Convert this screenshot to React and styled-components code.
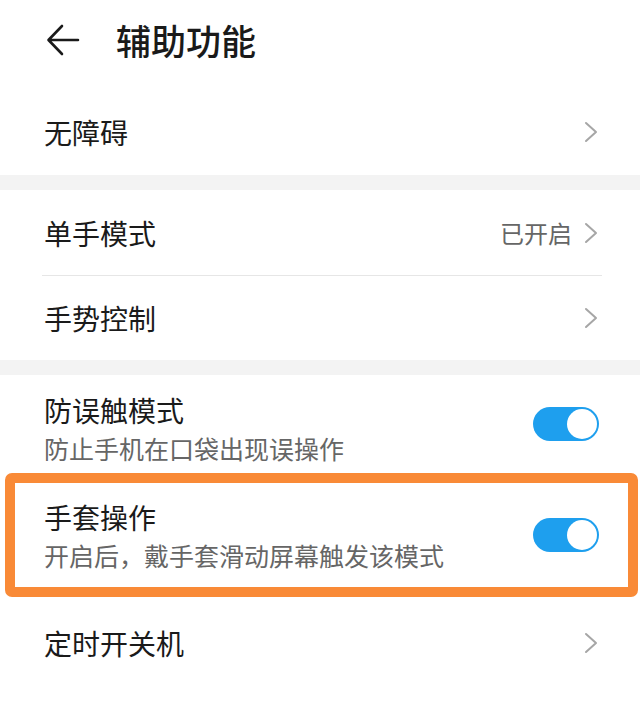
import styled, { createGlobalStyle } from "styled-components";

const GlobalStyle = createGlobalStyle`
  html, body {
    margin: 0;
    padding: 0;
    background: #fff;
  }
  body {
    font-family: "Noto Sans CJK SC", "Noto Sans", sans-serif;
    color: #1a1a1a;
  }
`;

const Page = styled.div`
  width: 640px;
  min-height: 707px;
  background: #fff;
  overflow: hidden;
`;

const Header = styled.header`
  height: 88px;
  display: flex;
  align-items: center;
  padding: 0 0 8px 46px;
  box-sizing: border-box;
  gap: 36px;
`;

const Title = styled.h1`
  margin: 0;
  font-size: 35px;
  font-weight: 500;
  line-height: 40px;
  color: #1a1a1a;
`;

const Gap = styled.div`
  height: 15px;
  background: #f3f3f3;
`;

const Row = styled.div`
  position: relative;
  display: flex;
  align-items: center;
  justify-content: space-between;
  box-sizing: border-box;
  height: ${(p) => p.$h}px;
  padding: 0 42px 0 44px;
  background: #fff;
`;

const Divider = styled.div`
  height: 1px;
  margin: 0 38px 0 42px;
  background: #e6e6e6;
`;

const Texts = styled.div`
  display: flex;
  flex-direction: column;
  gap: 4px;
  padding-top: ${(p) => p.$top || 0}px;
  align-self: ${(p) => (p.$top ? "flex-start" : "center")};
`;

const Label = styled.div`
  font-size: 28px;
  line-height: 36px;
  color: #1a1a1a;
`;

const Sub = styled.div`
  font-size: 25px;
  line-height: 33px;
  color: #666;
`;

const Right = styled.div`
  display: flex;
  align-items: center;
  gap: 12px;
  font-size: 24px;
  color: #666;
`;

const Toggle = styled.div`
  width: 66px;
  height: 34px;
  border-radius: 17px;
  background: #1e9fee;
  display: flex;
  align-items: center;
  justify-content: flex-end;
  padding: 2px;
  box-sizing: border-box;
  margin-right: -1px;

  &::after {
    content: "";
    width: 30px;
    height: 30px;
    border-radius: 50%;
    background: #fff;
  }
`;

// orange highlight drawn over the row
const Highlight = styled.div`
  position: absolute;
  left: 5px;
  right: 2px;
  top: 0;
  bottom: 0;
  border: 10px solid #f98a37;
  border-radius: 7px;
  pointer-events: none;
`;

function BackArrow() {
  return (
    <svg width="34" height="34" viewBox="0 0 34 34" fill="none">
      <path
        d="M32 17H3M16 3L2.5 17L16 31"
        stroke="#1a1a1a"
        strokeWidth="2.6"
        strokeLinecap="round"
        strokeLinejoin="round"
      />
    </svg>
  );
}

function Chevron() {
  return (
    <svg width="14" height="22" viewBox="0 0 14 22" fill="none">
      <path
        d="M2 2L12 11L2 20"
        stroke="#a6a6a6"
        strokeWidth="2"
        strokeLinecap="round"
        strokeLinejoin="round"
      />
    </svg>
  );
}

export default function App() {
  return (
    <Page>
      <GlobalStyle />
      <Header>
        <BackArrow />
        <Title>辅助功能</Title>
      </Header>

      <Row $h={87}>
        <Label>无障碍</Label>
        <Chevron />
      </Row>
      <Gap />

      <Row $h={85}>
        <Label>单手模式</Label>
        <Right>
          已开启
          <Chevron />
        </Right>
      </Row>
      <Divider />
      <Row $h={84}>
        <Label>手势控制</Label>
        <Chevron />
      </Row>
      <Gap />

      <Row $h={98}>
        <Texts $top={17}>
          <Label>防误触模式</Label>
          <Sub>防止手机在口袋出现误操作</Sub>
        </Texts>
        <Toggle />
      </Row>
      <Row $h={124}>
        <Texts $top={26}>
          <Label>手套操作</Label>
          <Sub>开启后，戴手套滑动屏幕触发该模式</Sub>
        </Texts>
        <Toggle />
        <Highlight />
      </Row>

      <Row $h={92}>
        <Label>定时开关机</Label>
        <Chevron />
      </Row>
    </Page>
  );
}
